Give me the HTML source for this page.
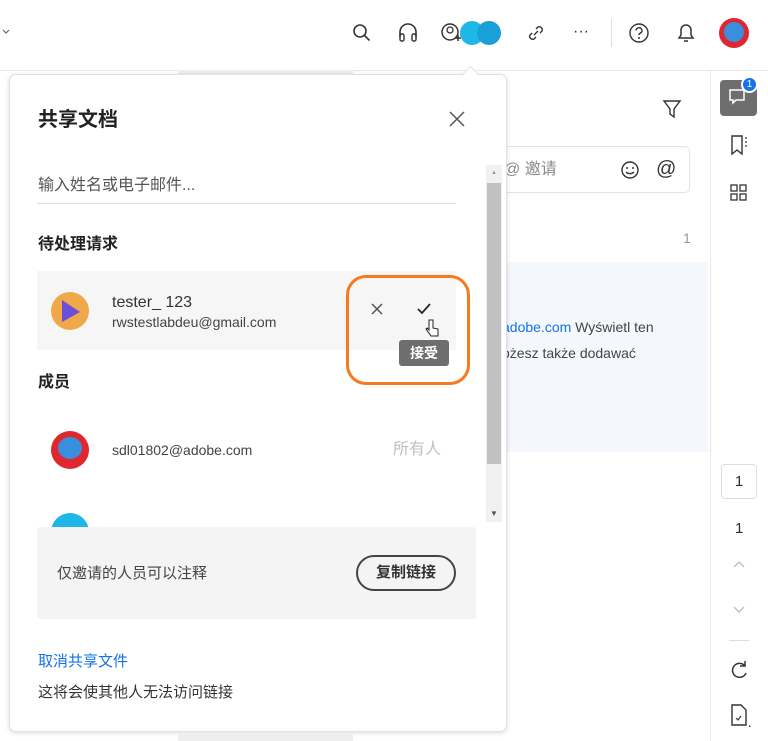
<!DOCTYPE html>
<html><head><meta charset="utf-8"><style>
*{margin:0;padding:0;box-sizing:border-box}
body{width:768px;height:741px;position:relative;overflow:hidden;background:#fff;font-family:"Liberation Sans","Noto Sans CJK SC",sans-serif;color:#2c2c2c}
.a{position:absolute}
.t{position:absolute;white-space:nowrap;line-height:1}
svg{position:absolute;overflow:visible}
</style></head><body>
<!-- top bar -->
<div class="a" style="left:0;top:70px;width:768px;height:1px;background:#e8e8e8"></div>
<svg style="left:2px;top:28px" width="10" height="8"><path d="M1 2l3 3 3-3" stroke="#666" fill="none" stroke-width="1.2"/></svg>
<svg style="left:352px;top:23px" width="20" height="20"><circle cx="8" cy="8" r="6" stroke="#333" stroke-width="1.6" fill="none"/><path d="M12.5 12.5l5 5" stroke="#333" stroke-width="1.6"/></svg>
<svg style="left:397px;top:22px" width="22" height="22"><path d="M3 15v-5a8 8 0 0116 0v5" stroke="#333" stroke-width="1.6" fill="none"/><rect x="3" y="12" width="4" height="7" rx="1.5" stroke="#333" stroke-width="1.4" fill="none"/><rect x="15" y="12" width="4" height="7" rx="1.5" stroke="#333" stroke-width="1.4" fill="none"/></svg>
<svg style="left:440px;top:22px" width="24" height="24"><circle cx="10" cy="10" r="8" stroke="#333" stroke-width="1.5" fill="none"/><circle cx="10" cy="8" r="3" stroke="#333" stroke-width="1.3" fill="none"/><path d="M15 16h6M18 13v6" stroke="#333" stroke-width="1.5"/></svg>
<div class="a" style="left:460px;top:21px;width:24px;height:24px;border-radius:50%;background:#1fb6e8"></div>
<div class="a" style="left:477px;top:21px;width:24px;height:24px;border-radius:50%;background:#1a9fd6"></div>
<svg style="left:525px;top:22px" width="22" height="22"><path d="M9 13l4-4M7 11l-2 2a3 3 0 004 4l2-2M15 11l2-2a3 3 0 00-4-4l-2 2" stroke="#333" stroke-width="1.4" fill="none"/></svg>
<div class="t" style="left:573px;top:24px;font-size:16px;color:#333">···</div>
<div class="a" style="left:611px;top:19px;width:1px;height:28px;background:#ddd"></div>
<svg style="left:628px;top:22px" width="22" height="22"><circle cx="11" cy="11" r="9" stroke="#333" stroke-width="1.4" fill="none"/><path d="M8 8.5a3 3 0 116 .5c0 2-3 2-3 4" stroke="#333" stroke-width="1.4" fill="none"/><circle cx="11" cy="16" r="1" fill="#333"/></svg>
<svg style="left:675px;top:21px" width="22" height="24"><path d="M4 17h14l-2-3v-5a5 5 0 00-10 0v5z" stroke="#333" stroke-width="1.5" fill="none"/><path d="M9 20h4" stroke="#333" stroke-width="1.5"/></svg>
<div class="a" style="left:719px;top:18px;width:30px;height:30px;border-radius:50%;background:#e0262e"></div>
<div class="a" style="left:724px;top:22px;width:20px;height:20px;border-radius:50%;background:#3a8fdc"></div>
<!-- right content -->
<div class="a" style="left:490px;top:146px;width:200px;height:47px;border:1px solid #e4e4e4;border-radius:5px"></div>
<div class="t" style="left:504px;top:162px;font-size:16px;color:#888">@ 邀请</div>
<svg style="left:620px;top:160px" width="20" height="20"><circle cx="10" cy="10" r="8" stroke="#333" stroke-width="1.4" fill="none"/><circle cx="7" cy="8" r="1" fill="#333"/><circle cx="13" cy="8" r="1" fill="#333"/><path d="M6 12a5 4 0 008 0" stroke="#333" stroke-width="1.3" fill="none"/></svg>
<div class="t" style="left:656px;top:159px;font-size:20px;color:#333">@</div>
<svg style="left:662px;top:99px" width="20" height="20"><path d="M2 2h16l-6 8v8l-4-3v-5z" stroke="#333" stroke-width="1.4" fill="none"/></svg>
<div class="t" style="left:683px;top:231px;font-size:14px;color:#999">1</div>
<div class="a" style="left:480px;top:262px;width:228px;height:190px;background:#f4f8fc"></div>
<div class="t" style="left:502px;top:320px;font-size:14px;color:#444"><span style="color:#1473e6">adobe.com</span> Wyświetl ten</div>
<div class="t" style="left:502px;top:346px;font-size:14px;color:#444">ożesz także dodawać</div>
<!-- right sidebar -->
<div class="a" style="left:710px;top:71px;width:1px;height:670px;background:#e8e8e8"></div>
<div class="a" style="left:720px;top:80px;width:37px;height:36px;border-radius:4px;background:#6e6e6e"></div>
<svg style="left:728px;top:88px" width="22" height="22"><path d="M2 2h14v10H8l-3 3v-3H2z" stroke="#fff" stroke-width="1.5" fill="none"/></svg>
<div class="a" style="left:741px;top:76px;width:17px;height:17px;border-radius:50%;background:#1473e6;border:2px solid #fff;color:#fff;font-size:10px;text-align:center;line-height:13px">1</div>
<svg style="left:729px;top:134px" width="22" height="24"><path d="M3 2h10v18l-5-4-5 4z" stroke="#333" stroke-width="1.4" fill="none"/><path d="M16 4h2M16 8h2M16 12h2" stroke="#333" stroke-width="1.2"/></svg>
<svg style="left:730px;top:184px" width="18" height="18"><rect x="1" y="1" width="6" height="6" stroke="#333" stroke-width="1.3" fill="none"/><rect x="10" y="1" width="6" height="6" stroke="#333" stroke-width="1.3" fill="none"/><rect x="1" y="10" width="6" height="6" stroke="#333" stroke-width="1.3" fill="none"/><rect x="10" y="10" width="6" height="6" stroke="#333" stroke-width="1.3" fill="none"/></svg>
<div class="a" style="left:721px;top:464px;width:36px;height:35px;border:1px solid #ddd;border-radius:4px;font-size:15px;text-align:center;line-height:33px">1</div>
<div class="t" style="left:735px;top:521px;font-size:15px">1</div>
<svg style="left:733px;top:561px" width="12" height="8"><path d="M1 6l5-5 5 5" stroke="#bbb" fill="none" stroke-width="1.3"/></svg>
<svg style="left:733px;top:606px" width="12" height="8"><path d="M1 1l5 5 5-5" stroke="#bbb" fill="none" stroke-width="1.3"/></svg>
<div class="a" style="left:729px;top:640px;width:20px;height:1px;background:#ddd"></div>
<svg style="left:729px;top:660px" width="20" height="20"><path d="M16 6a7 7 0 10 1 7" stroke="#333" stroke-width="1.5" fill="none"/><path d="M16 1v5h-5" stroke="#333" stroke-width="1.5" fill="none"/></svg>
<svg style="left:730px;top:704px" width="22" height="24"><path d="M2 1h9l5 5v15H2z" stroke="#333" stroke-width="1.4" fill="none"/><path d="M6 14l2 2 3-4" stroke="#333" stroke-width="1.2" fill="none"/><path d="M19 21l2 2h-2z" fill="#333"/></svg>
<!-- panel -->
<div class="a" style="left:178px;top:70px;width:175px;height:4px;background:#eee"></div>
<div class="a" style="left:9px;top:74px;width:498px;height:658px;background:#fff;border:1px solid #e2e2e2;border-radius:7px;box-shadow:0 1px 5px rgba(0,0,0,.15)"></div>
<div class="a" style="left:465px;top:68px;width:11px;height:11px;background:#fff;border-left:1px solid #e2e2e2;border-top:1px solid #e2e2e2;transform:rotate(45deg)"></div>
<div class="t" style="left:38px;top:110px;font-size:20px;font-weight:bold;color:#222">共享文档</div>
<svg style="left:449px;top:111px" width="16" height="16"><path d="M1 1l14 14M15 1L1 15" stroke="#555" stroke-width="1.5"/></svg>
<div class="t" style="left:38px;top:178px;font-size:16px;color:#555">输入姓名或电子邮件...</div>
<div class="a" style="left:37px;top:203px;width:419px;height:1px;background:#ddd"></div>
<div class="a" style="left:486px;top:165px;width:16px;height:357px;background:#f1f1f1"></div>
<div class="a" style="left:487px;top:183px;width:14px;height:281px;background:#c1c1c1"></div>
<div class="t" style="left:491px;top:170px;font-size:6px;color:#999">▲</div>
<div class="t" style="left:490px;top:510px;font-size:8px;color:#555">▼</div>
<div class="t" style="left:38px;top:237px;font-size:16px;font-weight:bold;color:#222">待处理请求</div>
<div class="a" style="left:37px;top:271px;width:419px;height:79px;background:#f6f6f6"></div>
<div class="a" style="left:51px;top:292px;width:38px;height:38px;border-radius:50%;background:#f1a84a"></div>
<svg style="left:58px;top:298px" width="26" height="26"><path d="M4 2l18 12-18 10z" fill="#6b4fd8"/></svg>
<div class="t" style="left:112px;top:295px;font-size:16px;color:#333">tester_ 123</div>
<div class="t" style="left:112px;top:315px;font-size:14px;color:#444">rwstestlabdeu@gmail.com</div>
<svg style="left:371px;top:303px" width="12" height="12"><path d="M1 1l10 10M11 1L1 11" stroke="#555" stroke-width="1.5"/></svg>
<svg style="left:417px;top:303px" width="14" height="12"><path d="M1 6l4 4 8-9" stroke="#222" stroke-width="1.7" fill="none"/></svg>
<div class="a" style="left:399px;top:340px;width:50px;height:26px;border-radius:3px;background:#6e6e6e;color:#fff;font-size:14px;font-weight:bold;text-align:center;line-height:26px">接受</div>
<svg style="left:424px;top:318px" width="16" height="22"><path d="M5 2v10l-2-2-1 1 5 7h7v-7l-5-1V2z" fill="#fff" stroke="#222" stroke-width="1"/></svg>
<div class="a" style="left:346px;top:275px;width:124px;height:110px;border:3px solid #f47b20;border-radius:20px"></div>
<div class="t" style="left:38px;top:375px;font-size:16px;font-weight:bold;color:#222">成员</div>
<div class="a" style="left:51px;top:431px;width:38px;height:38px;border-radius:50%;background:#e0262e"></div>
<div class="a" style="left:58px;top:437px;width:24px;height:22px;border-radius:50%;background:#3a8fdc"></div>
<div class="t" style="left:112px;top:443px;font-size:14px;color:#444">sdl01802@adobe.com</div>
<div class="t" style="left:393px;top:442px;font-size:16px;color:#c0c0c0">所有人</div>
<div class="a" style="left:51px;top:513px;width:38px;height:38px;border-radius:50%;background:#1fb6e8"></div>
<div class="a" style="left:37px;top:527px;width:439px;height:92px;background:#f4f4f4;border-radius:3px"></div>
<div class="t" style="left:57px;top:566px;font-size:15px;color:#444">仅邀请的人员可以注释</div>
<div class="a" style="left:356px;top:555px;width:100px;height:36px;border:2px solid #444;border-radius:18px;font-size:15px;font-weight:bold;text-align:center;line-height:32px;color:#333;background:#f4f4f4">复制链接</div>
<div class="t" style="left:38px;top:654px;font-size:15px;color:#1473e6">取消共享文件</div>
<div class="t" style="left:38px;top:685px;font-size:15px;color:#333">这将会使其他人无法访问链接</div>
<div class="a" style="left:178px;top:733px;width:175px;height:8px;background:#eee"></div>
</body></html>
